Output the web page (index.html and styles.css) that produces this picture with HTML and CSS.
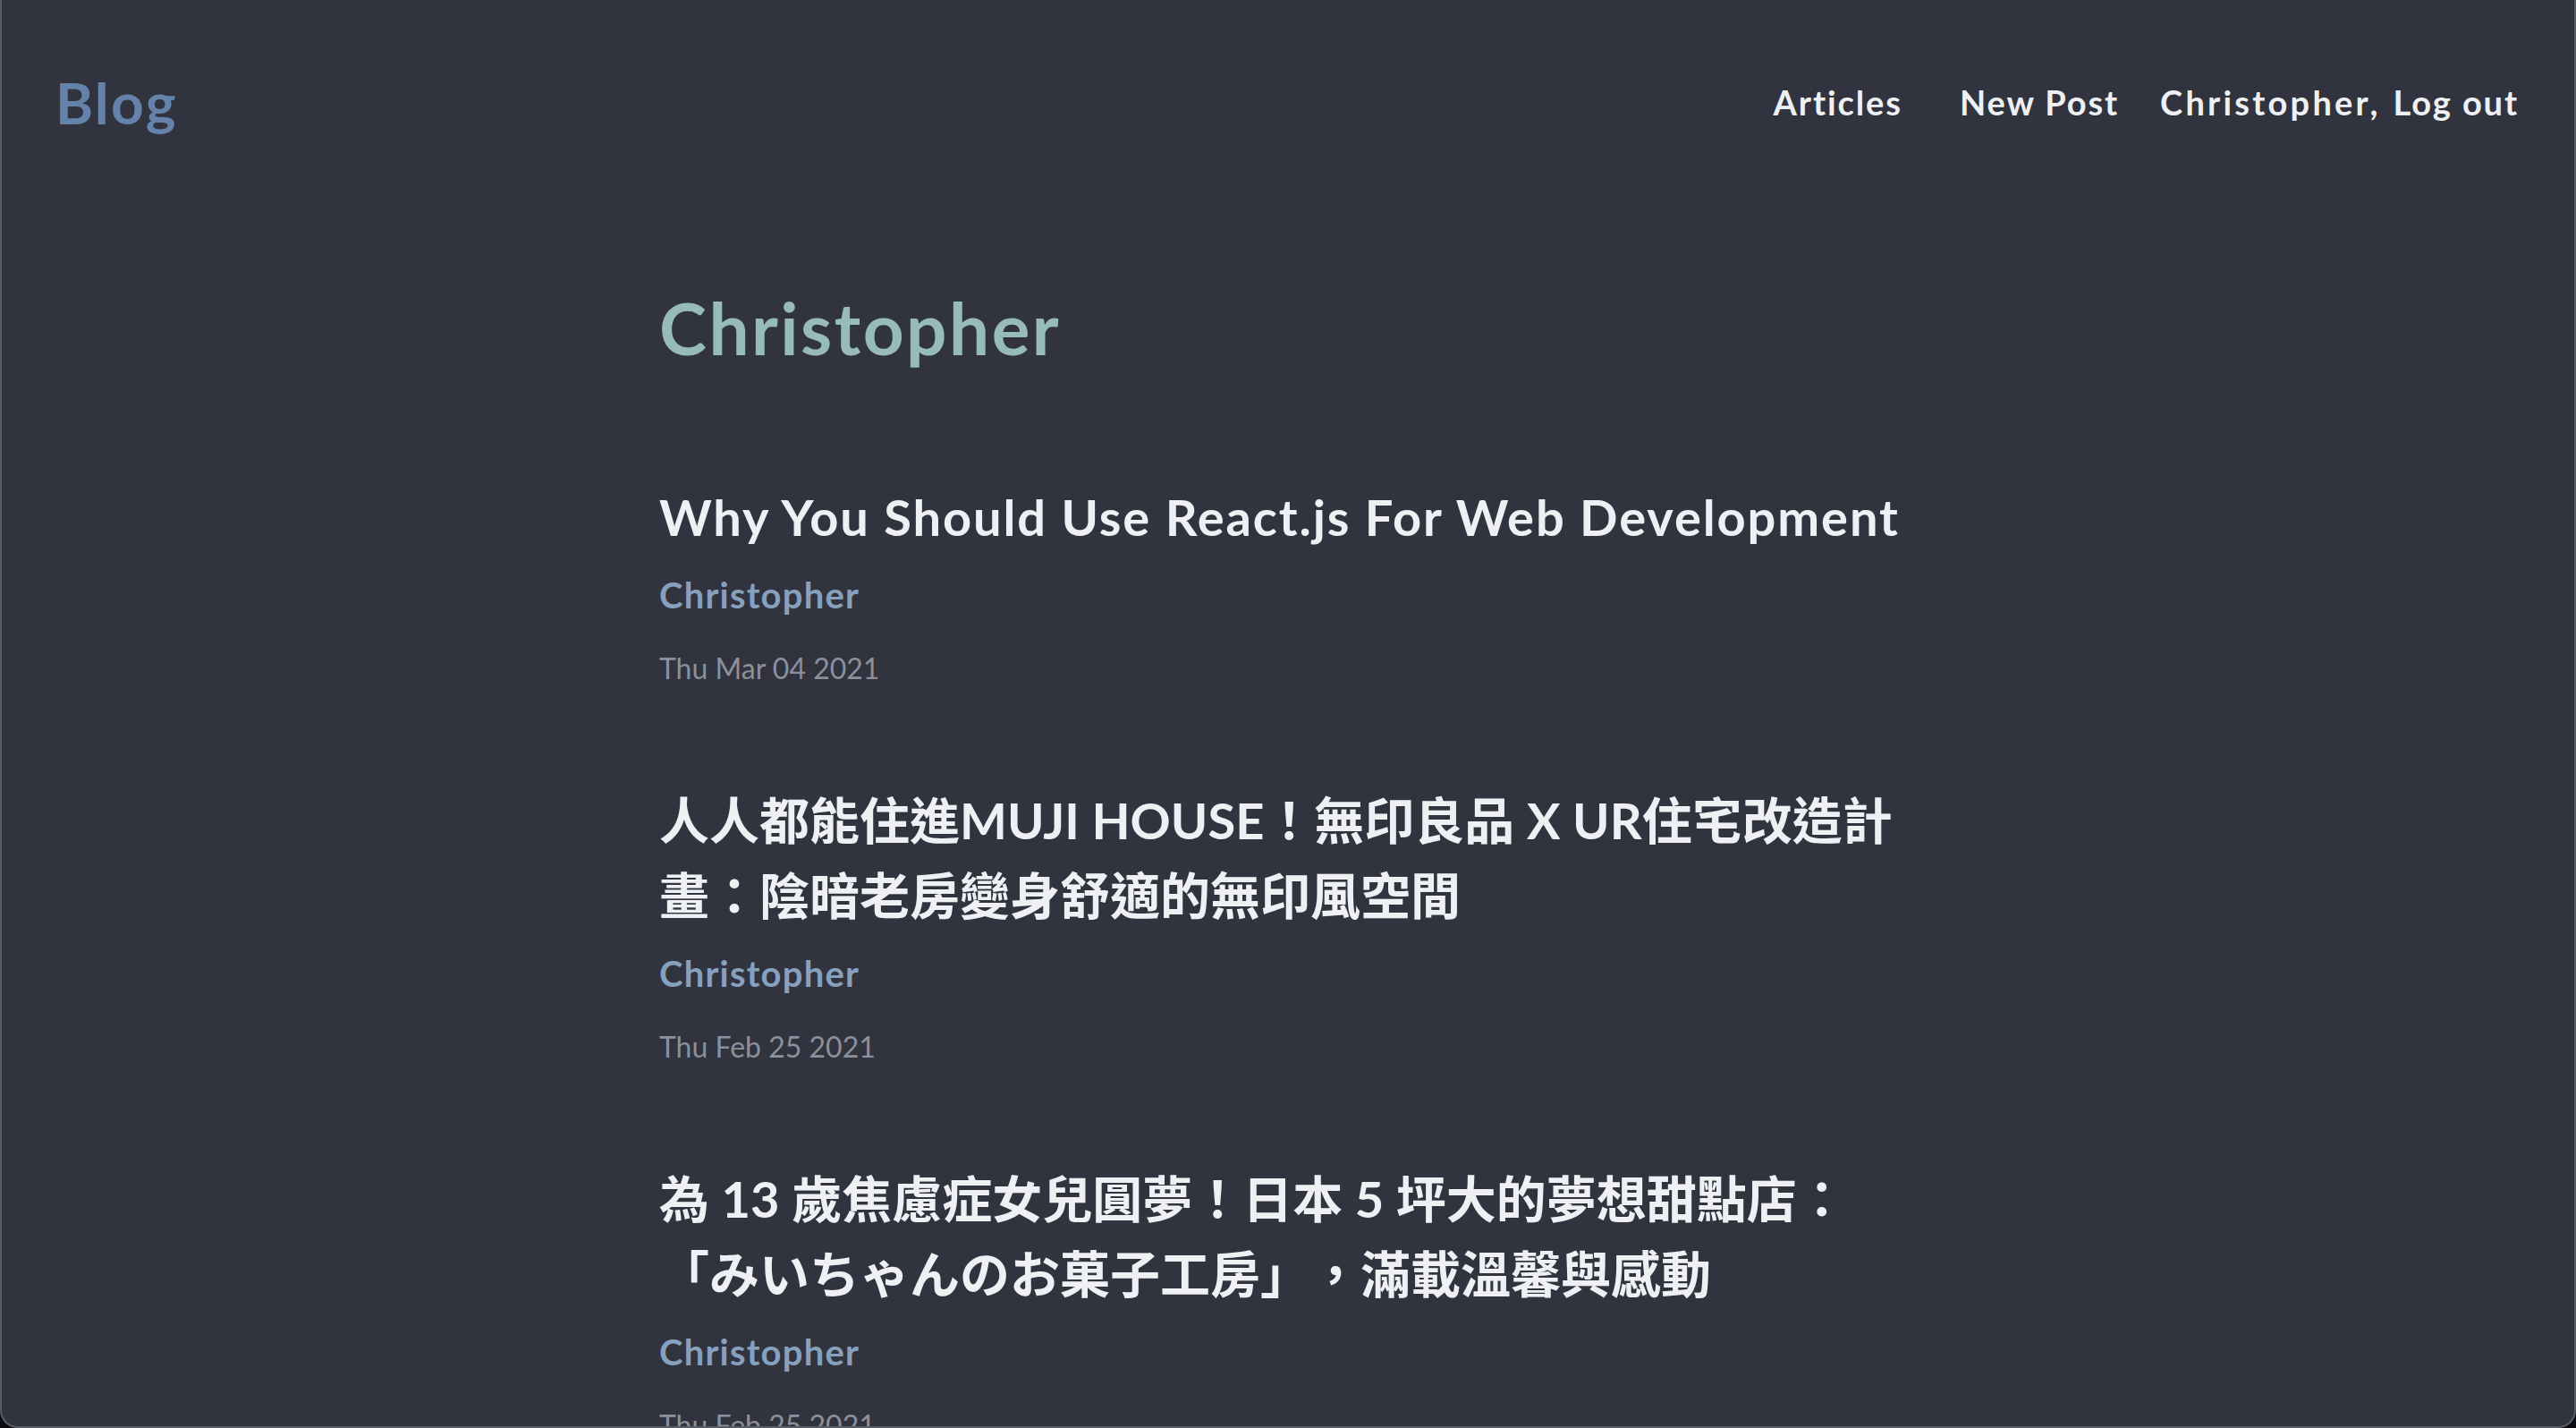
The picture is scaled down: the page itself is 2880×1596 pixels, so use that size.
FILE: index.html
```html
<!DOCTYPE html>
<html lang="zh-Hant">
<head>
<meta charset="utf-8">
<title>Blog</title>
<link rel="stylesheet" href="styles.css">
</head>
<body>
<div class="window">
  <header class="topbar">
    <a class="brand" href="#">Blog</a>
    <nav class="nav">
      <a class="nav-link articles" href="#">Articles</a>
      <a class="nav-link newpost" href="#">New Post</a>
      <span class="nav-user">Christopher,</span>
      <a class="nav-link logout" href="#">Log out</a>
    </nav>
  </header>
  <main class="content">
    <h1 class="page-title">Christopher</h1>
    <ul class="posts">
      <li class="post">
        <h2 class="post-title latin">Why You Should Use React.js For Web Development</h2>
        <div class="post-author">Christopher</div>
        <div class="post-date">Thu Mar 04 2021</div>
      </li>
      <li class="post">
        <h2 class="post-title">人人都能住進MUJI HOUSE！無印良品 X UR住宅改造計畫：陰暗老房變身舒適的無印風空間</h2>
        <div class="post-author">Christopher</div>
        <div class="post-date">Thu Feb 25 2021</div>
      </li>
      <li class="post">
        <h2 class="post-title">為 13 歲焦慮症女兒圓夢！日本 5 坪大的夢想甜點店：「みいちゃんのお菓子工房」，滿載溫馨與感動</h2>
        <div class="post-author">Christopher</div>
        <div class="post-date">Thu Feb 25 2021</div>
      </li>
    </ul>
  </main>
</div>
</body>
</html>
```

FILE: styles.css
```css
html, body {
  margin: 0;
  padding: 0;
  background: #0b0c10;
}

body {
  font-family: "Lato", "Noto Sans CJK TC", sans-serif;
  color: #eef0f4;
  text-spacing-trim: space-all;
}

.window {
  box-sizing: border-box;
  height: 1596px;
  background: #31343f;
  border-left: 2px solid #5a5d67;
  border-right: 2px solid #5a5d67;
  border-bottom: 2px solid #5a5d67;
  border-radius: 0 0 20px 20px;
  overflow: hidden;
}

.topbar {
  height: 228px;
  display: flex;
  align-items: center;
  justify-content: space-between;
  padding: 0 62px 0 60px;
}

.brand {
  color: #6482aa;
  font-weight: 700;
  font-size: 64px;
  letter-spacing: 0.035em;
  text-decoration: none;
}

.nav {
  display: flex;
  align-items: center;
  font-size: 38px;
  font-weight: 700;
  letter-spacing: 0.05em;
}

.nav-link {
  color: #eef0f4;
  text-decoration: none;
}

.articles { margin-right: 64px; }
.newpost { margin-right: 46px; }
.nav-user {
  margin-right: 14px;
  letter-spacing: 0.085em;
}

.content {
  width: 1406px;
  margin: 0 auto;
}

.page-title {
  margin: 90px 0 0;
  font-size: 80px;
  line-height: 96px;
  font-weight: 700;
  letter-spacing: 0.031em;
  color: #97babb;
}

.posts {
  list-style: none;
  margin: 122px 0 0;
  padding: 0;
}

.post {
  margin-bottom: 104px;
}

.post-title {
  margin: 0;
  font-size: 56px;
  line-height: 84px;
  font-weight: 700;
  color: #eef0f4;
}

.post-title.latin {
  letter-spacing: 0.034em;
}

.post-author {
  margin-top: 15px;
  font-size: 40px;
  line-height: 60px;
  font-weight: 700;
  letter-spacing: 0.03em;
  color: #86a0be;
}

.post-date {
  margin-top: 28px;
  font-size: 32px;
  line-height: 48px;
  font-weight: 400;
  color: #8b909c;
}
```
